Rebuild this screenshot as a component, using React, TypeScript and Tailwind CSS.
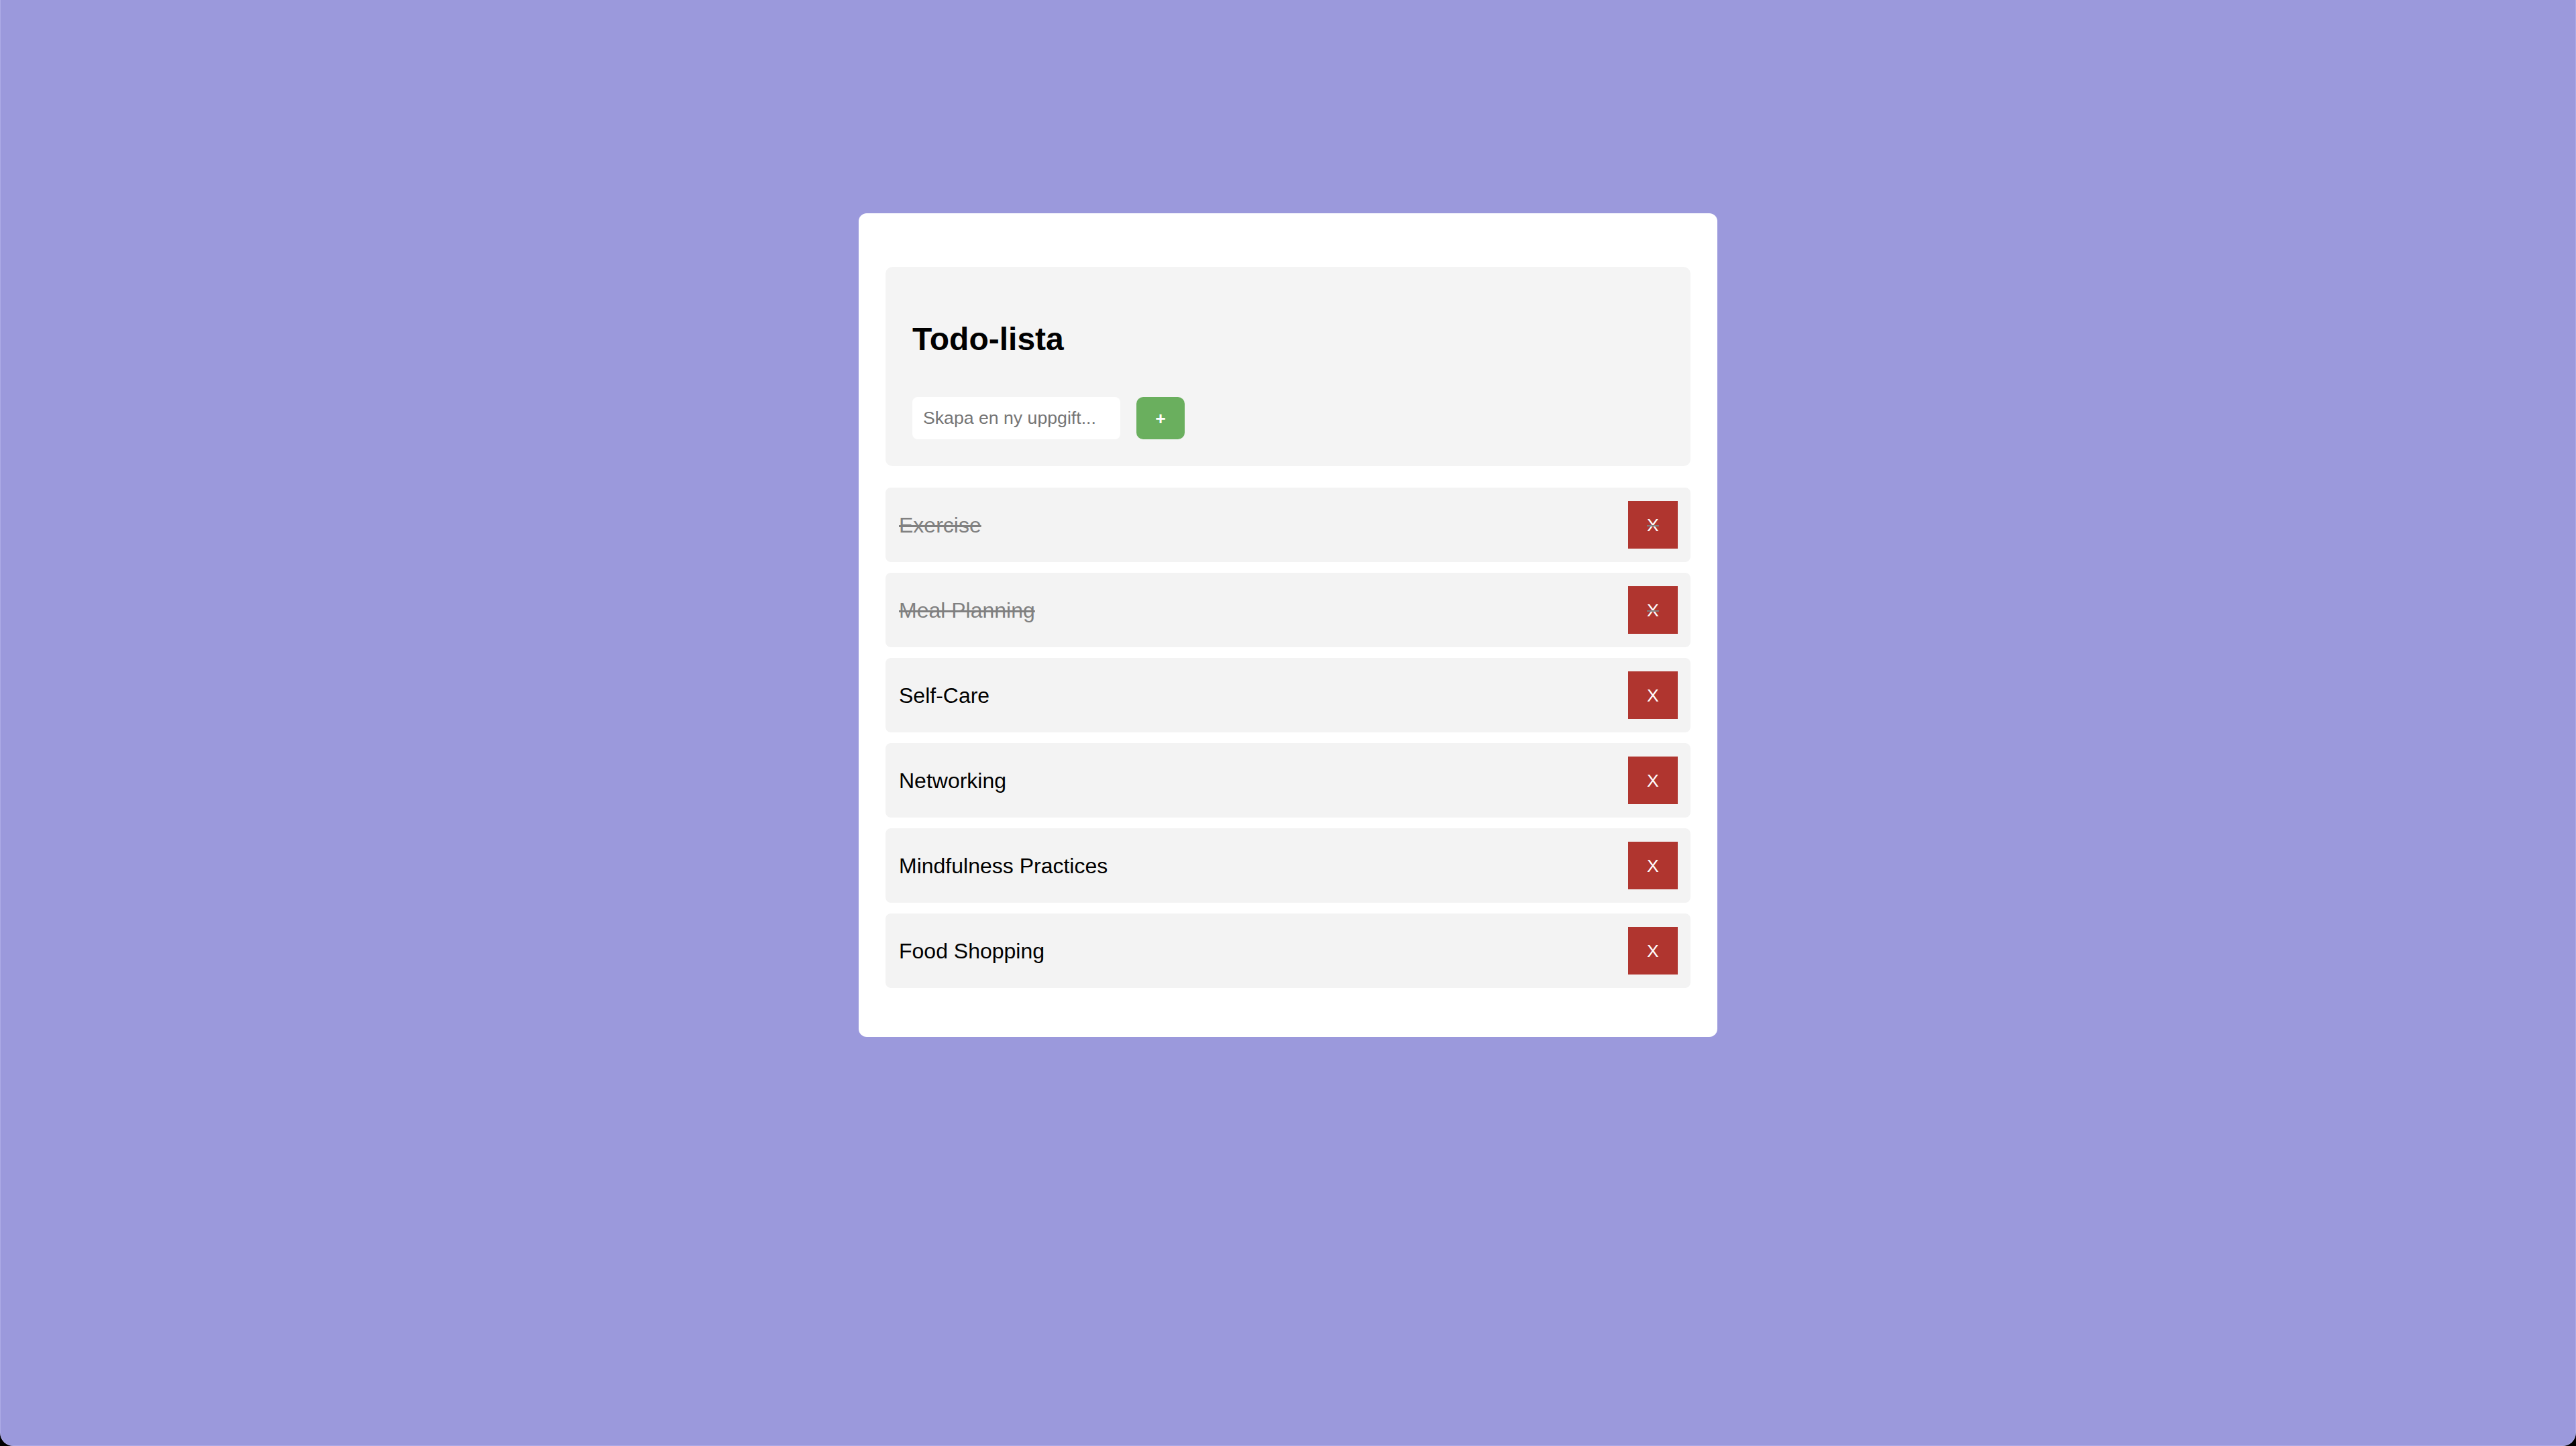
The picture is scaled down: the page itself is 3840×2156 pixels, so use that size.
import React, { useState } from "react";

interface Todo {
  id: number;
  text: string;
  done: boolean;
}

const startTodos: Todo[] = [
  { id: 1, text: "Exercise", done: true },
  { id: 2, text: "Meal Planning", done: true },
  { id: 3, text: "Self-Care", done: false },
  { id: 4, text: "Networking", done: false },
  { id: 5, text: "Mindfulness Practices", done: false },
  { id: 6, text: "Food Shopping", done: false },
];

const App: React.FC = () => {
  const [todos, setTodos] = useState<Todo[]>(startTodos);
  const [newTask, setNewTask] = useState("");

  const addTodo = () => {
    if (!newTask.trim()) return;
    setTodos([...todos, { id: Date.now(), text: newTask, done: false }]);
    setNewTask("");
  };

  const toggleTodo = (id: number) => {
    setTodos(todos.map((t) => (t.id === id ? { ...t, done: !t.done } : t)));
  };

  const removeTodo = (id: number) => {
    setTodos(todos.filter((t) => t.id !== id));
  };

  return (
    <div className="bg-black min-h-[2156px] font-['Liberation_Sans',Arial,sans-serif]">
      <div className="h-[2156px] bg-[#9b99dc] rounded-b-[20px] border-x border-b border-[#aeacE6] pt-[318px]">
        <div className="mx-auto w-[1280px] bg-white rounded-[12px] px-[40px] pt-[80px] pb-[73px]">
          <div className="bg-[#f4f4f4] rounded-[10px] px-[40px] pt-[40px] pb-[40px]">
            <h2 className="mt-[40px] mb-[59px] text-[48px] leading-[55px] font-bold text-black">Todo-lista</h2>
            <div className="flex gap-[24px]">
              <input
                type="text"
                placeholder="Skapa en ny uppgift..."
                value={newTask}
                onChange={(e) => setNewTask(e.target.value)}
                className="w-[310px] h-[63px] bg-white rounded-[8px] px-[16px] text-[26.67px] text-black placeholder:text-[#757575] outline-none"
              />
              <button
                onClick={addTodo}
                className="w-[72px] h-[63px] bg-[#6aaf5e] rounded-[10px] text-white text-[26.67px] font-bold flex items-center justify-center"
              >
                +
              </button>
            </div>
          </div>
          <ul className="mt-[32px] flex flex-col gap-[16px]">
            {todos.map((todo) => (
              <li
                key={todo.id}
                className="h-[111px] bg-[#f3f3f3] rounded-[8px] pl-[20px] pr-[19px] flex items-center justify-between"
              >
                <span
                  onClick={() => toggleTodo(todo.id)}
                  className={`text-[32px] cursor-pointer ${todo.done ? "line-through text-[#808080]" : "text-black"}`}
                >
                  {todo.text}
                </span>
                <button
                  onClick={() => removeTodo(todo.id)}
                  className="w-[74px] h-[71px] bg-[#b0352f] text-white text-[26.67px] flex items-center justify-center"
                >
                  <span className={todo.done ? "line-through decoration-[#808080]" : ""}>X</span>
                </button>
              </li>
            ))}
          </ul>
        </div>
      </div>
    </div>
  );
};

export default App;
